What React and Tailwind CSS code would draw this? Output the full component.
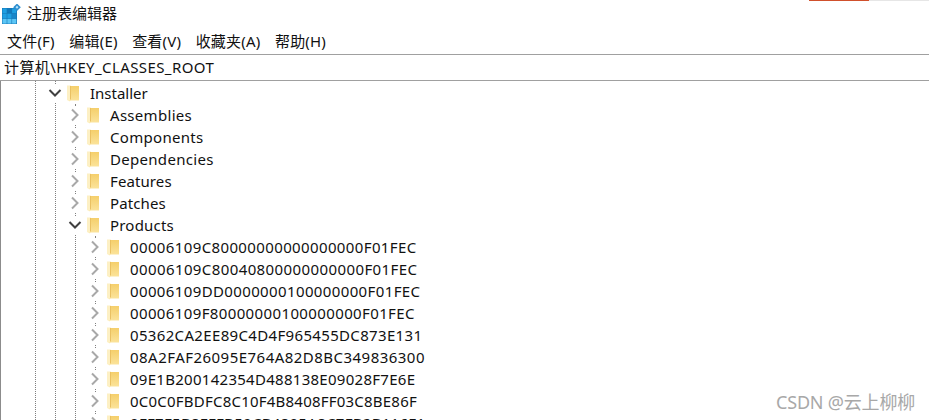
const FONT = "font-['Segoe_UI','Noto_Sans','Noto_Sans_CJK_SC',sans-serif]";

function AppIcon() {
  const cells = [];
  for (let r = 0; r < 3; r++) for (let c = 0; c < 3; c++) cells.push([c, r]);
  const fill = (c, r) => (r === 2 ? "#5cc6f5" : r === 0 && c === 1 ? "#1278ba" : c === 2 && r === 1 ? "#1a86c8" : "#1f9fe2");
  return (
    <svg width="20" height="20" viewBox="0 0 20 20" className="shrink-0">
      <rect x="0" y="4" width="15" height="16" fill="#1678b8" />
      {cells.map(([c, r]) => (
        <rect key={c + "-" + r} x={0.5 + c * 4.8} y={4.5 + r * 5.2} width="4.2" height="4.7" fill={fill(c, r)} />
      ))}
      <path d="M15 -0.5l3.8 3.8-3.8 3.8-3.8-3.8z" fill="#2f8fd0" />
      <path d="M15 1.8l1.5 1.5-1.5 1.5-1.5-1.5z" fill="#b9e4fa" />
    </svg>
  );
}

function Folder() {
  return (
    <svg width="12" height="17" viewBox="0 0 12 17" className="shrink-0 block">
      <defs>
        <linearGradient id="fold" x1="0" y1="0" x2="0" y2="1">
          <stop offset="0" stopColor="#f5cf6b" />
          <stop offset="1" stopColor="#fbe39a" />
        </linearGradient>
      </defs>
      <path d="M0 0.5 H4 V15 L2.5 16.5 L0 15 Z" fill="#fdf0c4" />
      <path d="M3.5 1 H12 V15.5 H2 L3.5 14.5 Z" fill="url(#fold)" />
      <path d="M3.5 1 V14.5" stroke="#eac163" strokeWidth="1" />
    </svg>
  );
}

function Chevron({ open }) {
  return (
    <span className="w-[14px] h-[18px] bg-white flex items-center justify-center shrink-0">
      {open ? (
        <svg width="14" height="10" viewBox="0 0 14 10">
          <path d="M1.5 2 L7 7.5 L12.5 2" fill="none" stroke="#404040" strokeWidth="2" />
        </svg>
      ) : (
        <svg width="10" height="14" viewBox="0 0 10 14">
          <path d="M2 1.5 L7.5 7 L2 12.5" fill="none" stroke="#a8a8a8" strokeWidth="2" />
        </svg>
      )}
    </span>
  );
}

function Row({ level, open, label, track }) {
  const pad = level === 0 ? "pl-[48px]" : level === 1 ? "pl-[68px]" : "pl-[88px]";
  return (
    <div className={"h-[22px] flex items-center shrink-0 " + pad}>
      <Chevron open={open} />
      <span className="ml-[5px]"><Folder /></span>
      <span className={"ml-[11px] text-[15px] text-[#111] whitespace-nowrap leading-[22px] " + track}>{label}</span>
    </div>
  );
}

const ROWS = [
  [0, true, "Installer", ""],
  [1, false, "Assemblies", "tracking-[0.3px]"],
  [1, false, "Components", "tracking-[0.3px]"],
  [1, false, "Dependencies", "tracking-[0.3px]"],
  [1, false, "Features", "tracking-[0.1px]"],
  [1, false, "Patches", "tracking-[0.1px]"],
  [1, true, "Products", "tracking-[0.2px]"],
  [2, false, "00006109C80000000000000000F01FEC", "tracking-[0.375px]"],
  [2, false, "00006109C80040800000000000F01FEC", "tracking-[0.4px]"],
  [2, false, "00006109DD0000000100000000F01FEC", "tracking-[0.375px]"],
  [2, false, "00006109F80000000100000000F01FEC", "tracking-[0.375px]"],
  [2, false, "05362CA2EE89C4D4F965455DC873E131", "tracking-[0.34px]"],
  [2, false, "08A2FAF26095E764A82D8BC349836300", "tracking-[0.47px]"],
  [2, false, "09E1B200142354D488138E09028F7E6E", "tracking-[0.28px]"],
  [2, false, "0C0C0FBDFC8C10F4B8408FF03C8BE86F", "tracking-[0.22px]"],
  [2, false, "0FF7F5B8FFFB59CB4895A8C7FB2B116F1", "tracking-[0.3px]"],
];

export default function App() {
  return (
    <div className={"relative w-[929px] h-[420px] overflow-hidden bg-white flex flex-col " + FONT}>
      <div className="absolute top-0 left-[809px] w-[60px] h-px bg-[#d0502c]" />
      <div className="absolute top-0 left-[869px] w-[60px] h-px bg-[#e6e6e6]" />
      <div className="h-[28px] flex items-center pl-[2px] gap-[5px] shrink-0">
        <AppIcon />
        <span className="text-[15px] text-[#111] -translate-y-px">注册表编辑器</span>
      </div>
      <div className="h-[26px] flex items-center pl-[7px] gap-[14.5px] text-[15px] tracking-[0.2px] text-[#111] shrink-0">
        <span>文件(F)</span>
        <span>编辑(E)</span>
        <span>查看(V)</span>
        <span>收藏夹(A)</span>
        <span>帮助(H)</span>
      </div>
      <div className="h-[27px] flex items-center pl-[4px] border-y border-[#a0a0a0] text-[15px] text-[#111] tracking-[0.4px] shrink-0">
        计算机\HKEY_CLASSES_ROOT
      </div>
      <div className="relative flex-1 min-h-0 pt-px border-l border-[#8c8c8c]">
        <div className="absolute top-0 bottom-0 left-[34px] border-l border-dotted border-[#808080]" />
        <div className="absolute top-0 bottom-0 left-[54px] border-l border-dotted border-[#808080]" />
        <div className="absolute top-[23px] bottom-0 left-[74px] border-l border-dotted border-[#808080]" />
        <div className="absolute top-[155px] bottom-0 left-[94px] border-l border-dotted border-[#808080]" />
        <div className="relative flex flex-col -ml-px">
          {ROWS.map((r, i) => (
            <Row key={i} level={r[0]} open={r[1]} label={r[2]} track={r[3]} />
          ))}
        </div>
      </div>
      <div className="absolute right-[14px] top-[390px] text-[18px] leading-[24px] tracking-[-0.2px] text-[#a8a8a8]">CSDN @云上柳柳</div>
    </div>
  );
}
